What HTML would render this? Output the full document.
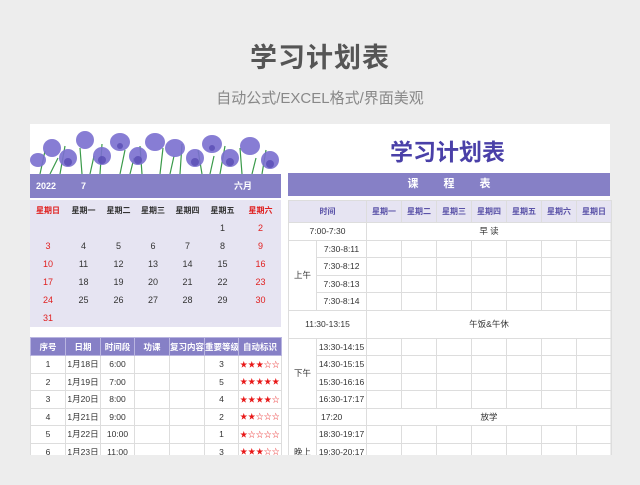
<!DOCTYPE html>
<html><head><meta charset="utf-8"><style>
*{margin:0;padding:0;box-sizing:border-box}
body{width:640px;height:485px;background:#ededed;font-family:"Liberation Sans","Noto Sans CJK SC",sans-serif;position:relative;overflow:hidden;color:#333}
.a{position:absolute}
.t1{left:0;width:640px;top:36px;text-align:center;font-size:27px;color:#555;font-weight:bold;letter-spacing:1px}
.t2{left:0;width:640px;top:87px;text-align:center;font-size:15px;color:#888}
.card{left:30px;top:124px;width:580px;height:331px;background:#fff}
table{border-collapse:collapse;position:absolute;table-layout:fixed}
td{text-align:center;font-size:8.5px;padding:0;overflow:hidden;white-space:nowrap}
.cal td{height:18px;font-size:9px;color:#333}
.cal td.r{color:#e02020}
.lt td{border:1px solid #ddd;height:17.5px}
.lt tr:first-child td{background:#8680c6;color:#fff;font-weight:bold;border-color:#b9b5e0;height:18px}
.lt td.st{color:#e81818;font-size:7.5px;letter-spacing:0.5px}
.rt td{border:1px solid #ddd;height:17.5px;color:#333}
.rt tr:first-child td{background:#e6e4f2;color:#5a52a8;font-weight:bold;height:22px;font-size:8px}
</style></head><body>
<div class="a t1">学习计划表</div>
<div class="a t2">自动公式/EXCEL格式/界面美观</div>
<div class="a card"></div>
<svg class="a" style="left:30px;top:126px" width="252" height="48">
<g stroke="#3a9a4a" stroke-width="1.2" fill="none">
<path d="M10 48 L15 25 M30 48 L35 20 M52 48 L50 22 M70 48 L72 18 M90 48 L95 24 M112 48 L110 20 M130 48 L133 22 M150 48 L152 18 M172 48 L168 24 M190 48 L195 20 M212 48 L210 22 M232 48 L236 24 M20 48 L28 32 M60 48 L64 30 M100 48 L104 32 M140 48 L144 30 M180 48 L184 30 M222 48 L226 32"/></g>
<g fill="#7b6fd0" opacity=".9">
<ellipse cx="8" cy="34" rx="8" ry="7"/><ellipse cx="22" cy="22" rx="9" ry="9"/><ellipse cx="38" cy="32" rx="9" ry="9"/><ellipse cx="55" cy="14" rx="9" ry="9"/><ellipse cx="72" cy="30" rx="9" ry="9"/><ellipse cx="90" cy="16" rx="10" ry="9"/><ellipse cx="108" cy="30" rx="9" ry="9"/><ellipse cx="125" cy="16" rx="10" ry="9"/><ellipse cx="145" cy="22" rx="10" ry="9"/><ellipse cx="165" cy="32" rx="9" ry="9"/><ellipse cx="182" cy="18" rx="10" ry="9"/><ellipse cx="200" cy="32" rx="9" ry="9"/><ellipse cx="220" cy="20" rx="10" ry="9"/><ellipse cx="240" cy="34" rx="9" ry="9"/></g>
<g fill="#5346b0" opacity=".7"><ellipse cx="38" cy="36" rx="4" ry="4"/><ellipse cx="72" cy="34" rx="4" ry="4"/><ellipse cx="108" cy="34" rx="4" ry="4"/><ellipse cx="165" cy="36" rx="4" ry="4"/><ellipse cx="200" cy="36" rx="4" ry="4"/><ellipse cx="240" cy="38" rx="4" ry="4"/><ellipse cx="90" cy="20" rx="3" ry="3"/><ellipse cx="182" cy="22" rx="3" ry="3"/></g>
</svg>
<div class="a" style="left:30px;top:174px;width:251px;height:24px;background:#8680c6;color:#fff;font-weight:bold;font-size:9px;line-height:24px">
<span class="a" style="left:6px">2022</span><span class="a" style="left:51px">7</span><span class="a" style="left:204px">六月</span></div>
<div class="a" style="left:30px;top:200px;width:251px;height:127px;background:#e6e4f2"></div>
<table class="cal" style="left:30px;top:201px;width:251px">
<colgroup><col style="width:36px"><col style="width:35px"><col style="width:35px"><col style="width:34px"><col style="width:35px"><col style="width:35px"><col style="width:41px"></colgroup>
<tr style="font-weight:bold"><td class="r" style="font-size:8px">星期日</td><td style="font-size:8px">星期一</td><td style="font-size:8px">星期二</td><td style="font-size:8px">星期三</td><td style="font-size:8px">星期四</td><td style="font-size:8px">星期五</td><td class="r" style="font-size:8px">星期六</td></tr>
<tr><td></td><td></td><td></td><td></td><td></td><td>1</td><td class="r">2</td></tr>
<tr><td class="r">3</td><td>4</td><td>5</td><td>6</td><td>7</td><td>8</td><td class="r">9</td></tr>
<tr><td class="r">10</td><td>11</td><td>12</td><td>13</td><td>14</td><td>15</td><td class="r">16</td></tr>
<tr><td class="r">17</td><td>18</td><td>19</td><td>20</td><td>21</td><td>22</td><td class="r">23</td></tr>
<tr><td class="r">24</td><td>25</td><td>26</td><td>27</td><td>28</td><td>29</td><td class="r">30</td></tr>
<tr><td class="r">31</td><td></td><td></td><td></td><td></td><td></td><td></td></tr>
</table>
<div class="a" style="left:30px;top:455px;width:610px;height:30px;background:#ededed;z-index:2"></div>
<table class="lt" style="left:30px;top:337px;width:251px">
<colgroup><col style="width:35px"><col style="width:35px"><col style="width:34px"><col style="width:35px"><col style="width:35px"><col style="width:34px"><col style="width:43px"></colgroup>
<tr><td>序号</td><td>日期</td><td>时间段</td><td>功课</td><td>复习内容</td><td>重要等级</td><td>自动标识</td></tr>
<tr><td>1</td><td>1月18日</td><td>6:00</td><td></td><td></td><td>3</td><td class="st">★★★☆☆</td></tr>
<tr><td>2</td><td>1月19日</td><td>7:00</td><td></td><td></td><td>5</td><td class="st">★★★★★</td></tr>
<tr><td>3</td><td>1月20日</td><td>8:00</td><td></td><td></td><td>4</td><td class="st">★★★★☆</td></tr>
<tr><td>4</td><td>1月21日</td><td>9:00</td><td></td><td></td><td>2</td><td class="st">★★☆☆☆</td></tr>
<tr><td>5</td><td>1月22日</td><td>10:00</td><td></td><td></td><td>1</td><td class="st">★☆☆☆☆</td></tr>
<tr><td>6</td><td>1月23日</td><td>11:00</td><td></td><td></td><td>3</td><td class="st">★★★☆☆</td></tr>
</table>
<div class="a" style="left:390px;top:133px;width:120px;font-size:23px;font-weight:bold;color:#4a40a8;white-space:nowrap">学习计划表</div>
<div class="a" style="left:288px;top:173px;width:322px;height:23px;background:#8680c6;color:#fff;font-weight:bold;font-size:11px;line-height:23px;text-align:center;word-spacing:22px">课 程 表</div>
<table class="rt" style="left:288px;top:200px;width:323px">
<colgroup><col style="width:28px"><col style="width:50px"><col span="7" style="width:35px"></colgroup>
<tr><td colspan="2">时间</td><td>星期一</td><td>星期二</td><td>星期三</td><td>星期四</td><td>星期五</td><td>星期六</td><td>星期日</td></tr>
<tr><td colspan="2">7:00-7:30</td><td colspan="7">早 读</td></tr>
<tr><td rowspan="4">上午</td><td>7:30-8:11</td><td></td><td></td><td></td><td></td><td></td><td></td><td></td></tr>
<tr><td>7:30-8:12</td><td></td><td></td><td></td><td></td><td></td><td></td><td></td></tr>
<tr><td>7:30-8:13</td><td></td><td></td><td></td><td></td><td></td><td></td><td></td></tr>
<tr><td>7:30-8:14</td><td></td><td></td><td></td><td></td><td></td><td></td><td></td></tr>
<tr><td colspan="2" style="height:28px">11:30-13:15</td><td colspan="7">午饭&amp;午休</td></tr>
<tr><td rowspan="4">下午</td><td>13:30-14:15</td><td></td><td></td><td></td><td></td><td></td><td></td><td></td></tr>
<tr><td>14:30-15:15</td><td></td><td></td><td></td><td></td><td></td><td></td><td></td></tr>
<tr><td>15:30-16:16</td><td></td><td></td><td></td><td></td><td></td><td></td><td></td></tr>
<tr><td>16:30-17:17</td><td></td><td></td><td></td><td></td><td></td><td></td><td></td></tr>
<tr><td></td><td style="text-align:left;padding-left:4px">17:20</td><td colspan="7">放学</td></tr>
<tr><td rowspan="3">晚上</td><td>18:30-19:17</td><td></td><td></td><td></td><td></td><td></td><td></td><td></td></tr>
<tr><td>19:30-20:17</td><td></td><td></td><td></td><td></td><td></td><td></td><td></td></tr>
<tr><td>20:30-21:17</td><td></td><td></td><td></td><td></td><td></td><td></td><td></td></tr>
</table>
</body></html>
